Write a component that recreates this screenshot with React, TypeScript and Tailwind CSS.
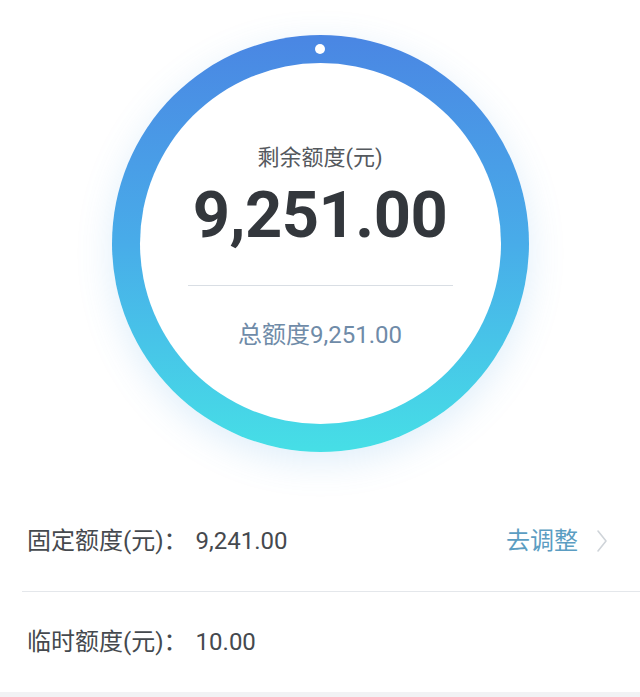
import React from 'react';

const FONT = "font-['Roboto','Noto_Sans_CJK_SC',sans-serif]";

const Row: React.FC<{ label: string; value: string; action?: string }> = ({ label, value, action }) => (
    <div className="flex items-center justify-between h-[100px] pl-[27px] pr-[32px]">
        <span className="text-[24px] text-[#45494e]">
            {label}：<span className="ml-[8px]">{value}</span>
        </span>
        {action && (
            <div className="flex items-center gap-[18px]">
                <span className="text-[24px] text-[#5b9dc2]">{action}</span>
                <svg width="12" height="24" viewBox="0 0 12 24" fill="none">
                    <path d="M2 2 L10 12 L2 22" stroke="#cfd4d9" strokeWidth="1.6" strokeLinecap="round" strokeLinejoin="round" />
                </svg>
            </div>
        )}
    </div>
);

const App: React.FC = () => {
    return (
        <div className={`w-[640px] h-[697px] bg-white flex flex-col overflow-hidden ${FONT}`}>
            {/* Quota ring */}
            <div className="flex justify-center pt-[35px]">
                <div className="relative w-[417px] h-[417px] rounded-full p-[28px] bg-gradient-to-b from-[#4a86e3] via-[#48ace9] to-[#46dfe6] shadow-[0_10px_36px_rgba(80,160,230,0.18)]">
                    <div className="absolute top-[9px] left-1/2 -translate-x-1/2 w-[10px] h-[10px] rounded-full bg-white" />
                    <div className="w-full h-full rounded-full bg-white flex flex-col items-center pt-[81px]">
                        <span className="text-[22px] leading-[28px] text-[#55595e]">剩余额度(元)</span>
                        <span className="mt-[10px] text-[65px] leading-[66px] font-bold text-[#33373c] tracking-[-0.5px]">9,251.00</span>
                        <div className="mt-[37px] w-[265px] h-px bg-[#d9dee4]" />
                        <span className="mt-[34px] text-[24px] leading-[30px] text-[#6f8ba8]">总额度9,251.00</span>
                    </div>
                </div>
            </div>

            {/* Detail rows */}
            <div className="mt-[39px] flex flex-col">
                <Row label="固定额度(元)" value="9,241.00" action="去调整" />
                <div className="ml-[22px] h-px bg-[#e4e7eb]" />
                <Row label="临时额度(元)" value="10.00" />
            </div>
            <div className="flex-1 bg-[#f1f2f4]" />
        </div>
    );
};

export default App;
